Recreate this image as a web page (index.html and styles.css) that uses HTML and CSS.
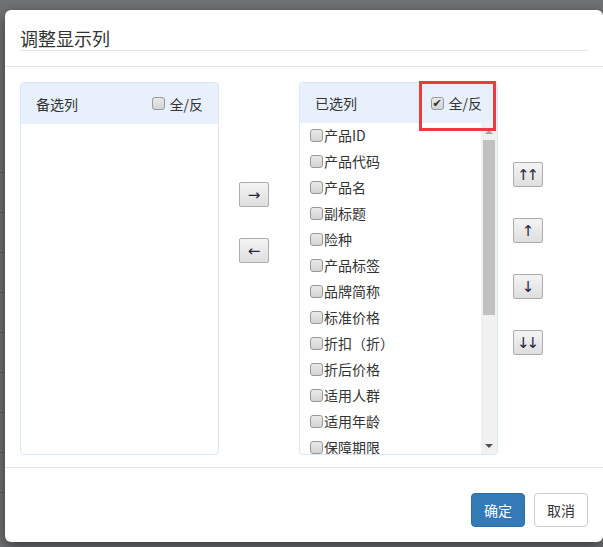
FILE: index.html
```html
<!DOCTYPE html>
<html lang="zh-CN">
<head>
  <meta charset="UTF-8" />
  <title>调整显示列</title>
  <link rel="stylesheet" href="styles.css">
</head>
<body>
  <div class="page">
    <div class="ligne"></div>
    <div class="ligne"></div>
    <div class="ligne"></div>
    <div class="ligne"></div>
    <div class="ligne"></div>
    <div class="ligne"></div>
    <div class="ligne"></div>
    <div class="ligne"></div>
    <div class="ligne"></div>
  </div>

  <div class="modal">
    <div class="modal-header">
      <h4 class="titre">调整显示列</h4>
    </div>

    <div class="modal-body">
      <section class="panneau">
        <div class="panneau-tete">
          <span>备选列</span>
          <label class="tout"><span class="chk"></span>全/反</label>
        </div>
        <div class="panneau-corps"></div>
      </section>

      <div class="fleches">
        <button class="btn-fleche">→</button>
        <button class="btn-fleche">←</button>
      </div>

      <section class="panneau panneau-choisi">
        <div class="panneau-tete">
          <span>已选列</span>
          <label class="tout"><span class="chk coche"></span>全/反</label>
        </div>
        <div class="panneau-corps liste-zone">
          <ul class="liste">
            <li><span class="chk"></span>产品ID</li>
            <li><span class="chk"></span>产品代码</li>
            <li><span class="chk"></span>产品名</li>
            <li><span class="chk"></span>副标题</li>
            <li><span class="chk"></span>险种</li>
            <li><span class="chk"></span>产品标签</li>
            <li><span class="chk"></span>品牌简称</li>
            <li><span class="chk"></span>标准价格</li>
            <li><span class="chk"></span>折扣（折）</li>
            <li><span class="chk"></span>折后价格</li>
            <li><span class="chk"></span>适用人群</li>
            <li><span class="chk"></span>适用年龄</li>
            <li><span class="chk"></span>保障期限</li>
          </ul>
          <div class="defil">
            <span class="defil-haut"></span>
            <span class="defil-pouce"></span>
            <span class="defil-bas"></span>
          </div>
        </div>
        <div class="surligne"></div>
      </section>

      <div class="fleches fleches-ordre">
        <button class="btn-fleche">↑↑</button>
        <button class="btn-fleche">↑</button>
        <button class="btn-fleche">↓</button>
        <button class="btn-fleche">↓↓</button>
      </div>
    </div>

    <div class="modal-footer">
      <button class="btn btn-primaire">确定</button>
      <button class="btn">取消</button>
    </div>
  </div>
</body>
</html>
```

FILE: styles.css
```css
body {
  margin: 0;
  width: 603px;
  height: 547px;
  overflow: hidden;
  background: #707274;
  font-family: "Noto Sans CJK SC", "Liberation Sans", sans-serif;
  font-size: 14px;
  color: #333;
}

.page {
  padding-top: 172px;
}

.ligne {
  height: 39px;
  border-top: 1px solid #5e6062;
}

.modal {
  position: absolute;
  top: 10px;
  left: 5px;
  width: 598px;
  height: 532px;
  background: #fff;
  border-radius: 6px;
  box-shadow: 0 5px 15px rgba(0,0,0,0.5);
  display: flex;
  flex-direction: column;
}

.modal-header {
  padding: 16px 15px 15px;
  border-bottom: 1px solid #e5e5e5;
}

.titre {
  margin: 0;
  font-size: 18px;
  font-weight: normal;
  line-height: 24px;
  border-bottom: 1px solid #e5e5e5;
}

.modal-body {
  display: flex;
  padding: 15px 15px 12px;
}

.panneau {
  position: relative;
  width: 199px;
  height: 373px;
  box-sizing: border-box;
  border: 1px solid #d9e7f7;
  border-radius: 4px;
  display: flex;
  flex-direction: column;
}

.panneau-tete {
  height: 41px;
  flex: none;
  background: #e8f1fb;
  display: flex;
  align-items: center;
  justify-content: space-between;
  padding: 0 15px;
  border-radius: 3px 3px 0 0;
}

.panneau-choisi .panneau-tete {
  height: 40px;
}

.tout {
  display: flex;
  align-items: center;
  gap: 5px;
}

.chk {
  display: inline-flex;
  align-items: center;
  justify-content: center;
  width: 13px;
  height: 13px;
  box-sizing: border-box;
  border: 1px solid #999;
  border-radius: 3px;
  background: linear-gradient(#e9e9e9, #d4d4d4);
  flex: none;
}

.chk.coche::after {
  content: "✔";
  font-family: "DejaVu Sans", sans-serif;
  font-size: 11px;
  line-height: 1;
  color: #2b2b2b;
}

.panneau-corps {
  flex: 1;
  min-height: 0;
}

.liste-zone {
  display: flex;
}

.liste {
  flex: 1;
  list-style: none;
  margin: 0;
  padding: 2px 0 0 10px;
  overflow: hidden;
}

.liste li {
  display: flex;
  align-items: center;
  gap: 1px;
  line-height: 20px;
  margin-bottom: 6px;
}

.defil {
  width: 16px;
  flex: none;
  background: #f1f1f1;
  display: flex;
  flex-direction: column;
  align-items: center;
}

.defil-haut, .defil-bas {
  height: 17px;
  width: 16px;
  display: flex;
  align-items: center;
  justify-content: center;
}

.defil-haut::after {
  content: "";
  border-left: 4px solid transparent;
  border-right: 4px solid transparent;
  border-bottom: 4px solid #a3a3a3;
}

.defil-bas {
  margin-top: auto;
}

.defil-bas::after {
  content: "";
  border-left: 4px solid transparent;
  border-right: 4px solid transparent;
  border-top: 4px solid #505050;
}

.defil-pouce {
  width: 12px;
  height: 175px;
  background: #c1c1c1;
}

.surligne {
  position: absolute;
  top: -2px;
  right: 1px;
  width: 77px;
  height: 50px;
  box-sizing: border-box;
  border: 3px solid #ea3b3d;
}

.fleches {
  width: 80px;
  box-sizing: border-box;
  padding: 100px 0 0 20px;
  display: flex;
  flex-direction: column;
  align-items: flex-start;
  gap: 31px;
}

.fleches-ordre {
  width: auto;
  padding: 80px 0 0 15px;
}

.btn-fleche {
  width: 30px;
  height: 25px;
  padding: 0;
  border: 1px solid #acacac;
  border-radius: 2px;
  background: linear-gradient(#f4f4f4, #dedede);
  font-family: "DejaVu Sans", sans-serif;
  font-size: 15px;
  color: #2a2440;
  letter-spacing: -3px;
  text-indent: -3px;
  cursor: pointer;
}

.modal-footer {
  margin-top: auto;
  border-top: 1px solid #e5e5e5;
  padding: 25px 15px 15px;
  display: flex;
  justify-content: flex-end;
  gap: 9px;
}

.btn {
  height: 34px;
  padding: 0 12px;
  font-family: "Noto Sans CJK SC", sans-serif;
  font-size: 14px;
  color: #333;
  background: #fff;
  border: 1px solid #ccc;
  border-radius: 4px;
  cursor: pointer;
}

.btn-primaire {
  color: #fff;
  background: #337ab7;
  border-color: #2e6da4;
}
```
